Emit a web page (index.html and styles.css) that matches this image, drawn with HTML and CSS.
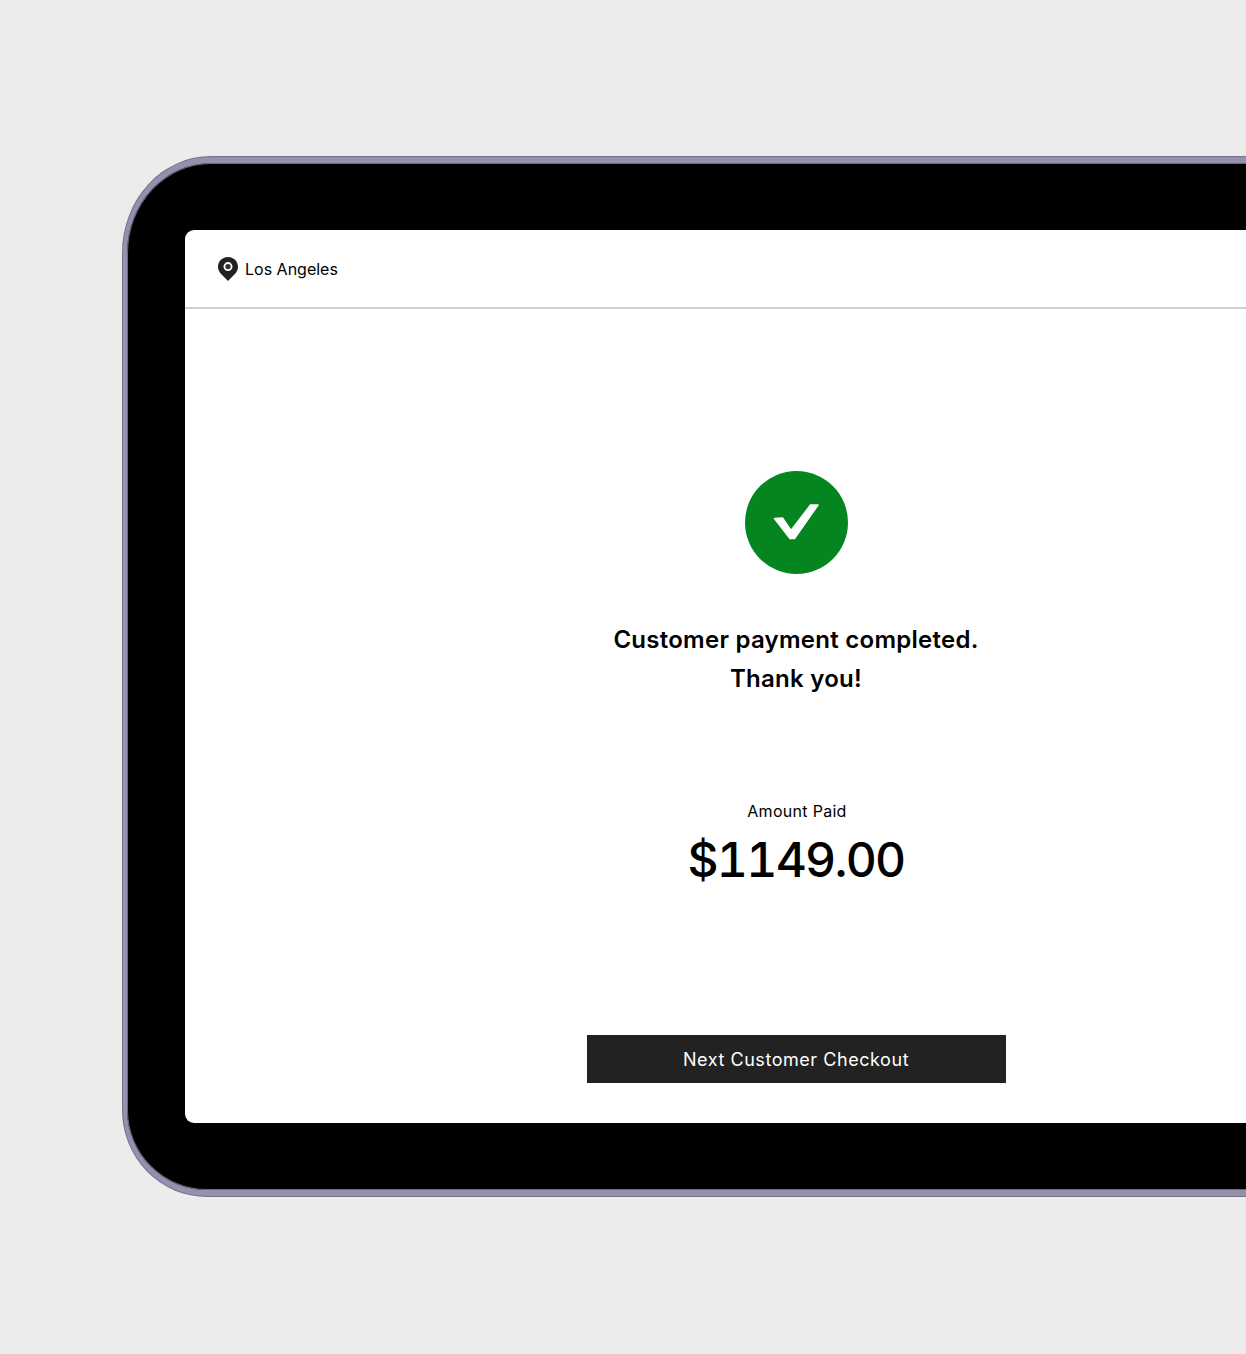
FILE: index.html
```html
<!DOCTYPE html>
<html lang="en">
<head>
    <meta charset="UTF-8">
    <meta name="viewport" content="width=device-width, initial-scale=1.0">
    <title>Payment Complete</title>
    <link rel="stylesheet" href="styles.css">
</head>
<body>
    <div class="tablet">
        <div class="screen">
            <header class="topbar">
                <svg class="pin" width="22" height="26" viewBox="0 0 22 26">
                    <path fill="#222" d="M11 1C5.400 1 1 5.300 1 10.700c0 3.100 1.300 5.400 3.400 7.500L11 25l6.600-6.800c2.100-2.100 3.400-4.400 3.400-7.500C21 5.300 16.600 1 11 1z"/>
                    <circle cx="11" cy="10.600" r="3.600" fill="#333" stroke="#fff" stroke-width="1.800"/>
                </svg>
                <span class="location">Los Angeles</span>
            </header>
            <main class="content">
                <svg class="check" width="103" height="103" viewBox="0 0 103 103">
                    <circle cx="51.500" cy="51.500" r="51.500" fill="#048520"/>
                    <path fill="#fff" stroke="#fff" stroke-width="1.500" stroke-linejoin="round" d="M29.500 47.500L37.500 47L46 59.500L65.500 34L73 34L49.500 67.500L45 67.500z"/>
                </svg>
                <h1 class="message">Customer payment completed.<br>Thank you!</h1>
                <p class="amount-label">Amount Paid</p>
                <p class="amount">$1149.00</p>
                <button type="button" class="next-btn">Next Customer Checkout</button>
            </main>
        </div>
    </div>
</body>
</html>
```

FILE: styles.css
```css
body {
    margin: 0;
    height: 1354px;
    background-color: #ececec;
    overflow: hidden;
    font-family: "Inter", "Liberation Sans", sans-serif;
    color: #000;
}
.tablet {
    box-sizing: border-box;
    width: 1347px;
    height: 1039px;
    margin: 157px 0 0 123px;
    padding: 67px 58px;
    background-color: #000;
    border-style: solid;
    border-color: #9490ae;
    border-width: 6px 5px 6px 4px;
    border-radius: 88px 88px 84px 84px / 96px 96px 86px 86px;
    box-shadow: 0 0 0 1px #76728c, inset 0 0 0 1px #6b6780;
}
.screen {
    height: 893px;
    background-color: #fff;
    border-radius: 9px;
    overflow: hidden;
}
.topbar {
    display: flex;
    align-items: center;
    gap: 6px;
    height: 77px;
    padding-left: 32px;
    border-bottom: 2px solid #d0d0d0;
}
.location {
    font-size: 16px;
}
.content {
    display: flex;
    flex-direction: column;
    align-items: center;
    padding-top: 162px;
}
.check {
    display: block;
}
.message {
    margin: 46px 0 0;
    font-size: 24px;
    font-weight: 600;
    line-height: 39px;
    letter-spacing: 0.26px;
    text-align: center;
}
.amount-label {
    margin: 103px 0 0 2px;
    font-size: 16px;
    line-height: 20px;
    letter-spacing: 0.3px;
}
.amount {
    margin: 10px 0 0;
    font-size: 48px;
    font-weight: 550;
    line-height: 58px;
    letter-spacing: -1.7px;
    font-variant-numeric: tabular-nums;
}
.next-btn {
    width: 419px;
    height: 48px;
    margin-top: 146px;
    background-color: #222;
    color: #fff;
    border: none;
    font-family: "Inter", sans-serif;
    font-size: 18px;
    letter-spacing: 0.55px;
}
```
